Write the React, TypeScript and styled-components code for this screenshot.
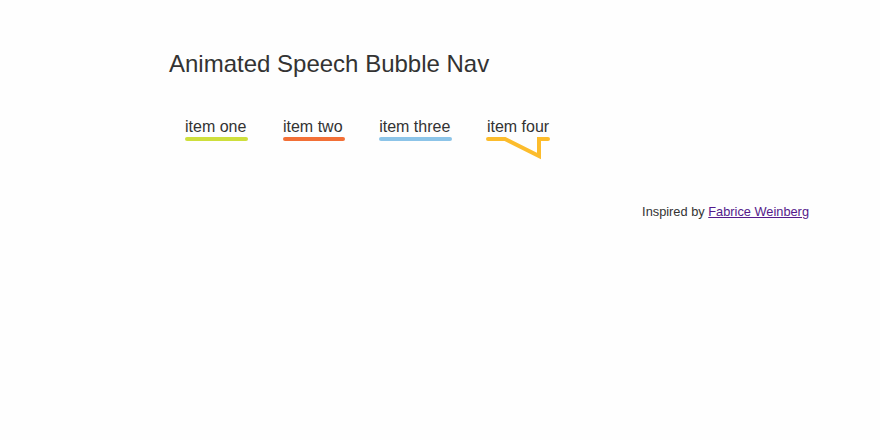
import React from "react";
import styled, { createGlobalStyle } from "styled-components";

const Global = createGlobalStyle`
  html, body { margin: 0; padding: 0; background: #fefefe; }
  body { font-family: "Liberation Sans", Arial, sans-serif; color: #333; }
`;

const Page = styled.div`
  width: 880px;
  height: 440px;
  box-sizing: border-box;
  padding: 50px 71px 0 169px;
`;

const Title = styled.h1`
  margin: 0;
  font-size: 24px;
  line-height: 28px;
  font-weight: normal;
  color: #333;
`;

const Nav = styled.ul`
  list-style: none;
  margin: 40px 0 0;
  padding: 0 0 0 16px;
  display: flex;
  align-items: flex-start;
  gap: 36.6px;
`;

const Item = styled.li`
  display: flex;
  flex-direction: column;
  align-items: flex-start;
`;

const Label = styled.a`
  font-size: 16px;
  line-height: 18px;
  color: #333;
  text-decoration: none;
  white-space: nowrap;
`;

const Bar = styled.span<{ $color: string }>`
  display: block;
  width: calc(100% + 2px);
  height: 4px;
  margin-top: 1px;
  border-radius: 2px;
  background: ${(p) => p.$color};
`;

const Bubble = styled.svg`
  display: block;
  margin: -1px 0 0 -1px;
  overflow: visible;
`;

const Footer = styled.p`
  margin: 45px 0 0;
  text-align: right;
  font-size: 12.8px;
  line-height: 15px;
  color: #333;
`;

const Link = styled.a`
  color: #551a8b;
  text-decoration: underline;
`;

const items = [
  { label: "item one", color: "#cedf3c", active: false },
  { label: "item two", color: "#f26f36", active: false },
  { label: "item three", color: "#8cc4e8", active: false },
  { label: "item four", color: "#fcbc2c", active: true },
];

export default function App() {
  return (
    <>
      <Global />
      <Page>
        <Title>Animated Speech Bubble Nav</Title>
        <Nav>
          {items.map((it) => (
            <Item key={it.label}>
              <Label href="#">{it.label}</Label>
              {it.active ? (
                <Bubble width="64" height="24" viewBox="0 0 64 24">
                  <path
                    d="M2 4 H19 L53 21 V4 H62"
                    fill="none"
                    stroke={it.color}
                    strokeWidth="4"
                    strokeLinecap="round"
                    strokeLinejoin="miter"
                  />
                </Bubble>
              ) : (
                <Bar $color={it.color} />
              )}
            </Item>
          ))}
        </Nav>
        <Footer>
          Inspired by <Link href="#">Fabrice Weinberg</Link>
        </Footer>
      </Page>
    </>
  );
}
